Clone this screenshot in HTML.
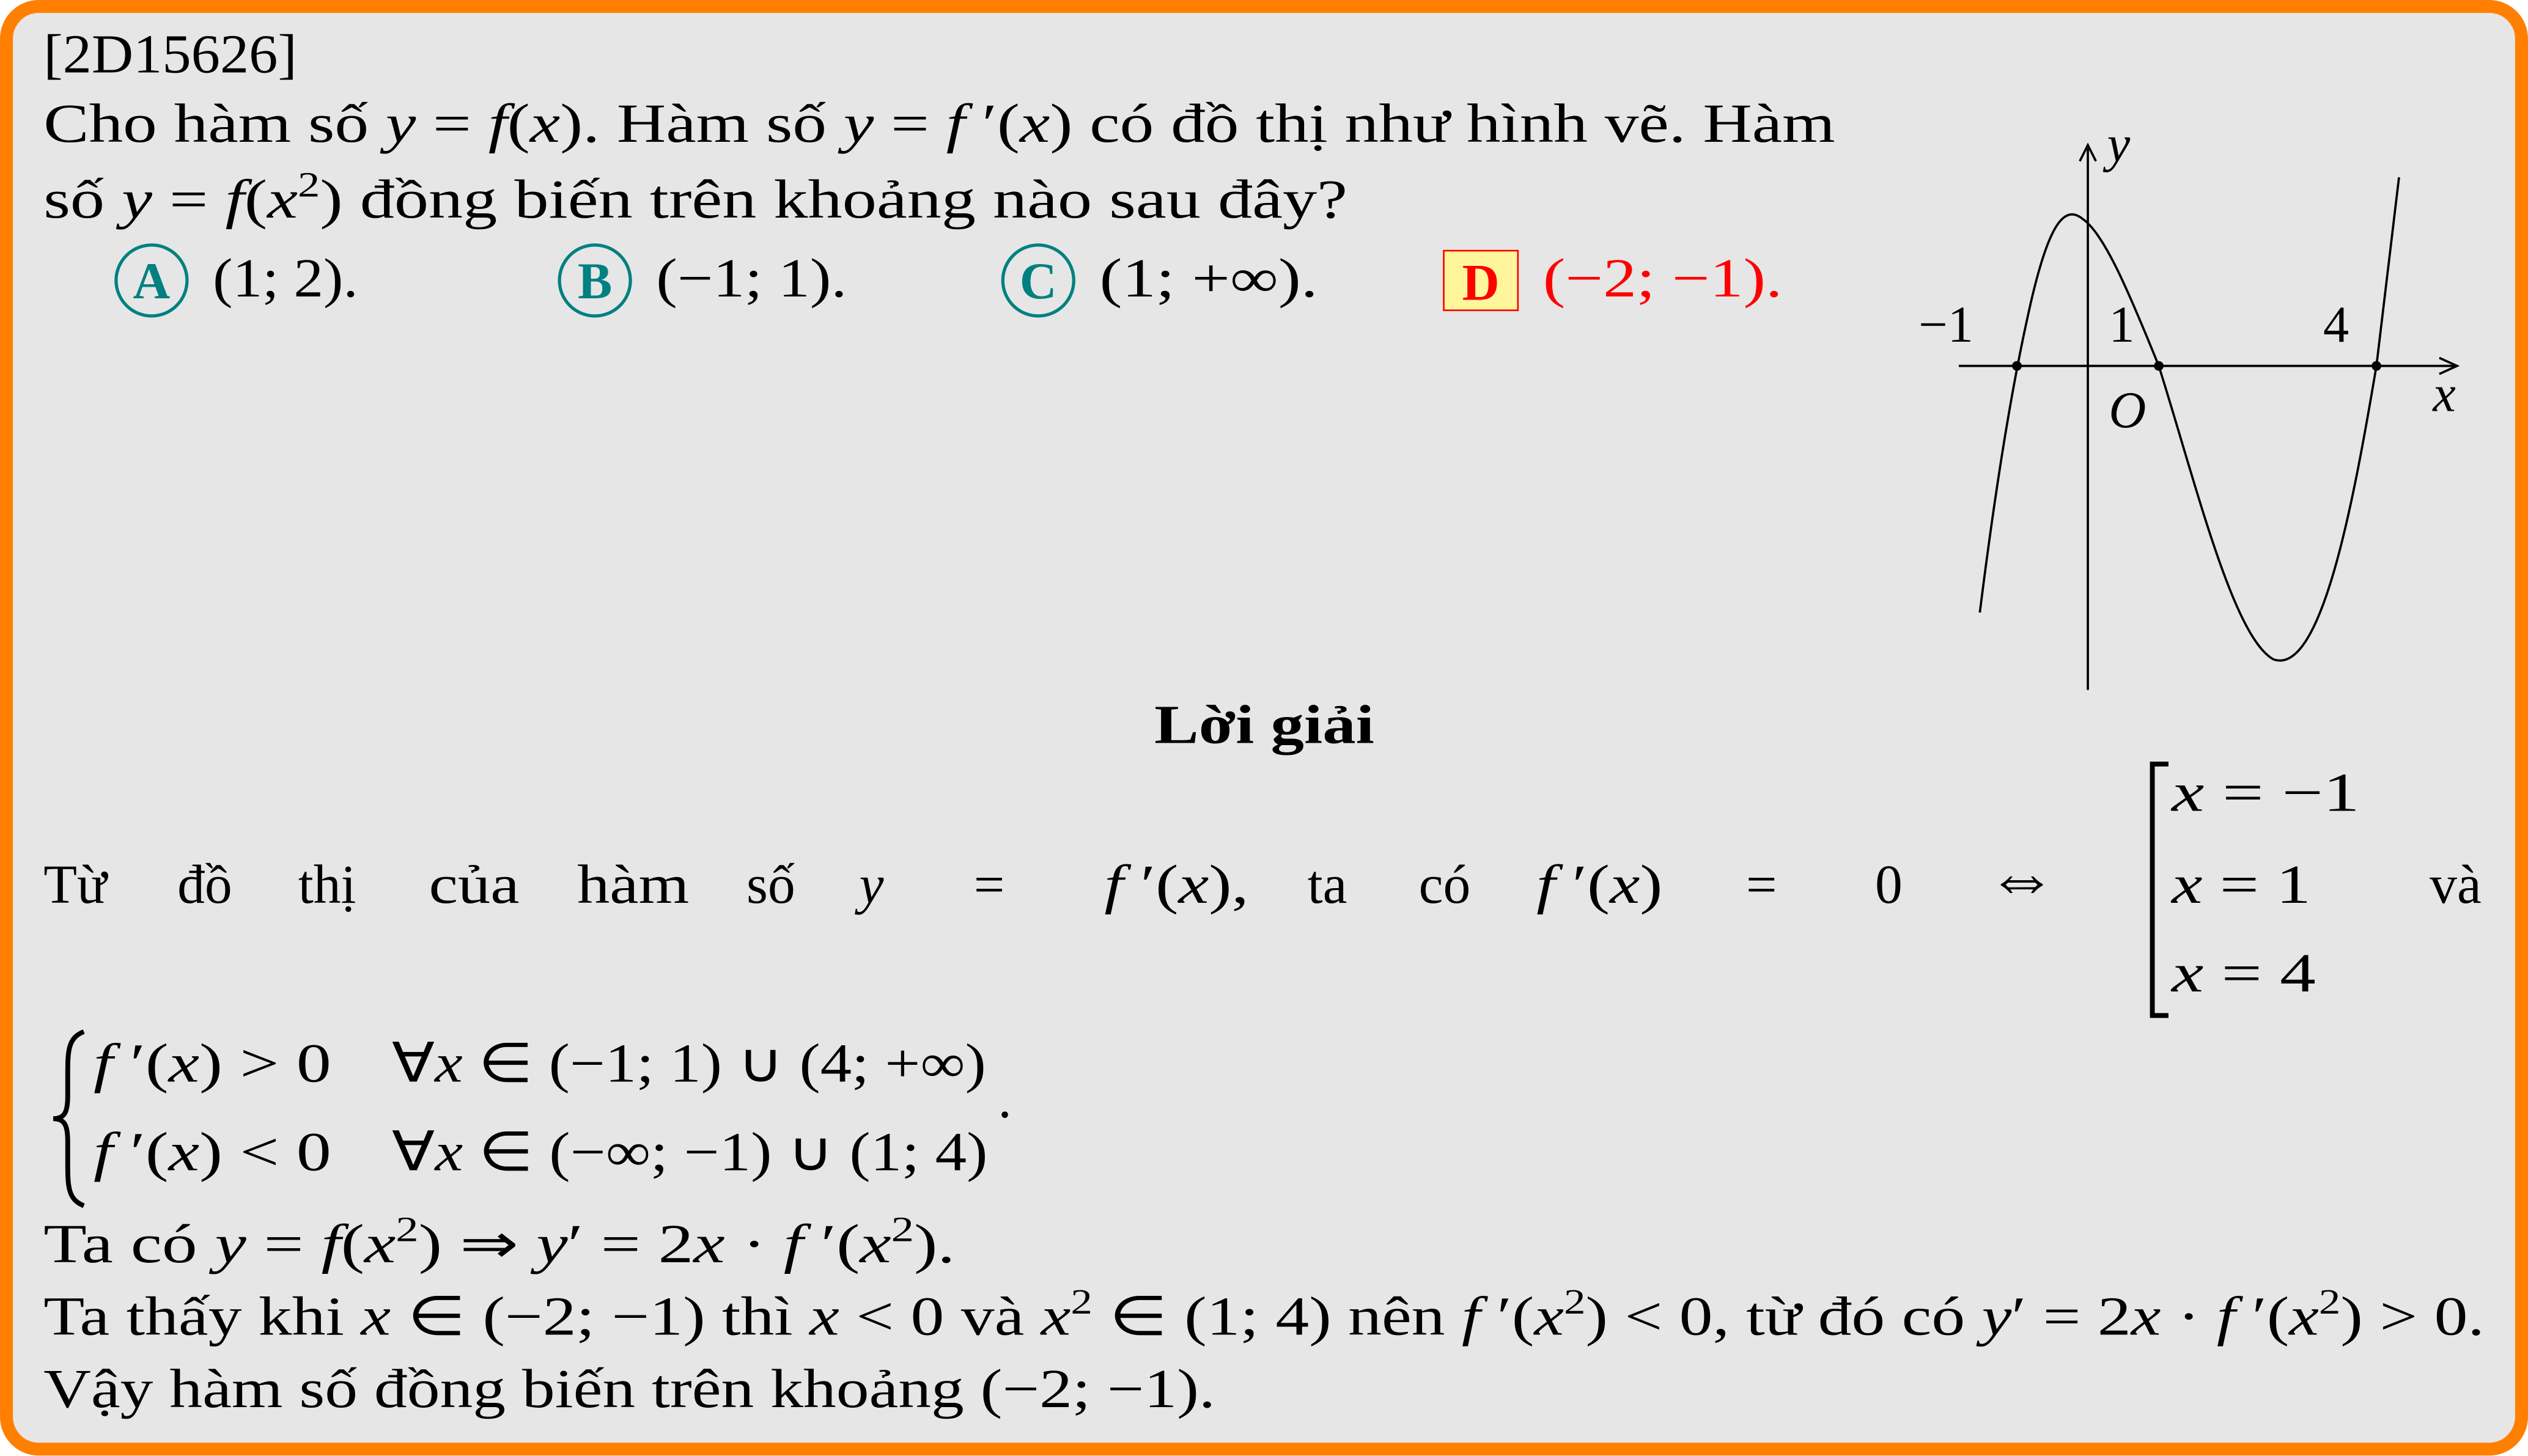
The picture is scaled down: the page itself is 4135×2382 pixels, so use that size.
<!DOCTYPE html>
<html><head><meta charset="utf-8"><style>
html,body{margin:0;padding:0;background:#fff;}
#wrap{width:4135px;height:2382px;overflow:hidden;position:relative;}
#s{position:absolute;left:0;top:0;width:1568px;height:903.3px;transform:scale(2.6371);transform-origin:0 0;}
#box{position:absolute;left:0;top:0;width:1552px;height:887px;border:8px solid #ff8000;border-radius:24px;background:#e6e6e6;}
.t{position:absolute;font-family:"Liberation Serif",serif;font-size:34px;line-height:34px;color:#000;white-space:nowrap;}
.t>span{display:inline-block;transform-origin:0 50%;}
i{font-style:italic;}
sup{font-size:22px;line-height:0;vertical-align:13px;}
.circ{position:absolute;width:42px;height:42px;border:2.5px solid #008080;border-radius:50%;color:#008080;font-family:"Liberation Serif",serif;font-weight:bold;font-size:32px;line-height:42px;text-align:center;}
</style></head><body><div id="wrap"><div id="s">
<div id="box"></div>
<div class="t fit" style="left:27px;top:18px;width:157px"><span>[2D15626]</span></div>
<div class="t fit" style="left:27px;top:61px;width:1111px"><span>Cho hàm số <i>y</i> = <i>f</i>(<i>x</i>). Hàm số <i>y</i> = <i>f</i> ′(<i>x</i>) có đồ thị như hình vẽ. Hàm</span></div>
<div class="t fit" style="left:27px;top:108px;width:809px"><span>số <i>y</i> = <i>f</i>(<i>x</i><sup>2</sup>) đồng biến trên khoảng nào sau đây?</span></div>

<div class="circ" style="left:71px;top:151px">A</div>
<div class="t fit" style="left:132px;top:157px;width:90px"><span>(1; 2).</span></div>
<div class="circ" style="left:346px;top:151px">B</div>
<div class="t fit" style="left:407px;top:157px;width:118px"><span>(−1; 1).</span></div>
<div class="circ" style="left:621px;top:151px">C</div>
<div class="t fit" style="left:682px;top:157px;width:136px"><span>(1; +∞).</span></div>
<div style="position:absolute;left:895px;top:155px;width:45px;height:36px;border:1.5px solid #f00;background:#fff59a;color:#f00;font-family:'Liberation Serif',serif;font-weight:bold;font-size:32px;line-height:38px;text-align:center;">D</div>
<div class="t fit" style="left:957px;top:157px;width:148px;color:#f00"><span>(−2; −1).</span></div>

<svg style="position:absolute;left:1180px;top:70px" width="380" height="370" viewBox="1180 70 380 370">
<g stroke="#000" stroke-width="1.4" fill="none">
<line x1="1295" y1="428" x2="1295" y2="92"/>
<path d="M1290 100 L1295 90 L1300 100"/>
<line x1="1215" y1="227" x2="1523" y2="227"/>
<path d="M1513 222 L1524 227 L1513 232"/>
<path d="M1228 380 C1238 300,1248 240,1258 195 C1270 140,1280 126,1292 136 C1305 145,1320 180,1339 227 C1362 300,1385 395,1410 409 C1440 420,1460 310,1474 227 L1488 110"/>
</g>
<circle cx="1251" cy="227" r="3"/><circle cx="1339" cy="227" r="3"/><circle cx="1474" cy="227" r="3"/>
<g font-family="Liberation Serif,serif" font-size="32">
<text x="1190" y="212">−1</text><text x="1308" y="212">1</text><text x="1441" y="212">4</text>
<text x="1308" y="265" font-style="italic">O</text><text x="1509" y="255" font-style="italic">x</text><text x="1307" y="100" font-style="italic">y</text>
</g></svg>

<div class="t fit" style="left:716px;top:434px;width:136px;font-weight:bold"><span>Lời giải</span></div>

<div class="t" style="left:27px;top:533px">Từ</div>
<div class="t" style="left:110px;top:533px">đồ</div>
<div class="t" style="left:185px;top:533px">thị</div>
<div class="t fit" style="left:266px;top:533px;width:56px"><span>của</span></div>
<div class="t fit" style="left:358px;top:533px;width:70px"><span>hàm</span></div>
<div class="t" style="left:463px;top:533px">số</div>
<div class="t" style="left:533px;top:533px"><i>y</i></div>
<div class="t" style="left:604px;top:533px">=</div>
<div class="t fit" style="left:685px;top:533px;width:90px"><span><i>f</i> ′(<i>x</i>),</span></div>
<div class="t" style="left:811px;top:533px">ta</div>
<div class="t" style="left:880px;top:533px">có</div>
<div class="t fit" style="left:953px;top:533px;width:78px"><span><i>f</i> ′(<i>x</i>)</span></div>
<div class="t" style="left:1083px;top:533px">=</div>
<div class="t" style="left:1163px;top:533px">0</div>
<div class="t" style="left:1232px;top:528px;font-size:44px">⇔</div>
<svg style="position:absolute;left:1330px;top:472px" width="20" height="162"><path d="M15 2 L5 2 L5 158 L15 158" stroke="#000" stroke-width="3" fill="none"/></svg>
<div class="t fit" style="left:1347px;top:476px;width:116px"><span><i>x</i> = −1</span></div>
<div class="t fit" style="left:1347px;top:533px;width:86px"><span><i>x</i> = 1</span></div>
<div class="t fit" style="left:1347px;top:588px;width:89px"><span><i>x</i> = 4</span></div>
<div class="t" style="left:1507px;top:533px">và</div>

<svg style="position:absolute;left:30px;top:638px" width="30" height="112" viewBox="0 0 30 112"><path d="M22 2 C12 6,12 14,12 30 L12 42 C12 52,10 56,3 56 C10 56,12 60,12 70 L12 82 C12 98,12 106,22 110" stroke="#000" stroke-width="3" fill="none"/></svg>
<div class="t fit" style="left:58px;top:644px;width:147px"><span><i>f</i> ′(<i>x</i>) &gt; 0</span></div>
<div class="t fit" style="left:243px;top:644px;width:369px"><span>∀<i>x</i> ∈ (−1; 1) ∪ (4; +∞)</span></div>
<div class="t fit" style="left:58px;top:699px;width:147px"><span><i>f</i> ′(<i>x</i>) &lt; 0</span></div>
<div class="t fit" style="left:243px;top:699px;width:370px"><span>∀<i>x</i> ∈ (−∞; −1) ∪ (1; 4)</span></div>
<div class="t" style="left:619px;top:666px">.</div>

<div class="t fit" style="left:27px;top:756px;width:565px"><span>Ta có <i>y</i> = <i>f</i>(<i>x</i><sup>2</sup>) ⇒ <i>y</i>′ = 2<i>x</i> · <i>f</i> ′(<i>x</i><sup>2</sup>).</span></div>
<div class="t fit" style="left:27px;top:801px;width:1514px"><span>Ta thấy khi <i>x</i> ∈ (−2; −1) thì <i>x</i> &lt; 0 và <i>x</i><sup>2</sup> ∈ (1; 4) nên <i>f</i> ′(<i>x</i><sup>2</sup>) &lt; 0, từ đó có <i>y</i>′ = 2<i>x</i> · <i>f</i> ′(<i>x</i><sup>2</sup>) &gt; 0.</span></div>
<div class="t fit" style="left:27px;top:846px;width:727px"><span>Vậy hàm số đồng biến trên khoảng (−2; −1).</span></div>
</div></div>
<script>
document.querySelectorAll('.fit').forEach(function(el){
  var sp=el.firstElementChild;var w=parseFloat(el.style.width);var n=sp.offsetWidth;
  if(n>0&&w>0){sp.style.transform='scaleX('+(w/n)+')';}
});
</script>
</body></html>
